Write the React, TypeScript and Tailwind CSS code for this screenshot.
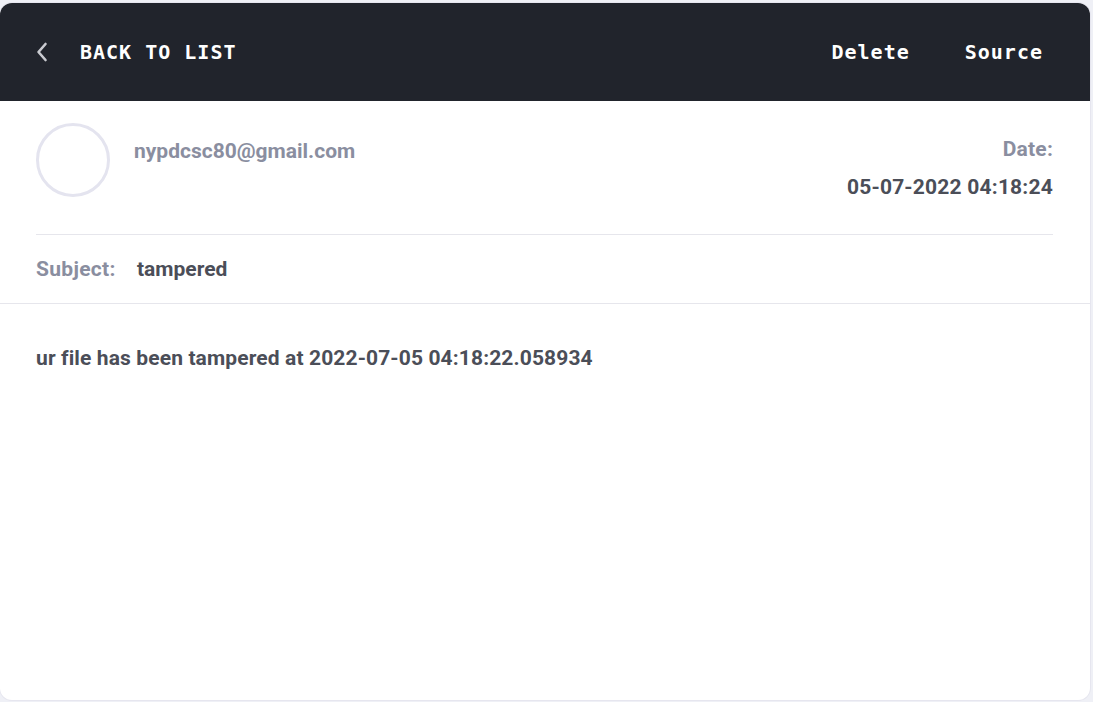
import React from 'react'

const ChevronLeft = () => (
    <svg width="12" height="20" viewBox="0 0 12 20" fill="none">
        <path d="M9.5 2 L2.5 10 L9.5 18" stroke="#c9cad0" strokeWidth="2.6" strokeLinecap="round" strokeLinejoin="round" />
    </svg>
)

const App: React.FC = () => {
    return (
        <div className="min-h-screen bg-[#eff0f6] pt-[3px] pr-[3px] pb-[2px]" style={{ fontFamily: 'Roboto, "Liberation Sans", sans-serif' }}>
            <div className="flex h-[697px] flex-col overflow-hidden rounded-xl bg-white shadow-[0_0_0_1px_#e6e6ef]">
                <header className="flex h-[98px] shrink-0 items-center justify-between bg-[#21242c] pl-[36px] pr-[47px] font-['DejaVu_Sans_Mono',monospace] text-[20px] font-bold tracking-[1px] text-white">
                    <div className="flex items-center">
                        <ChevronLeft />
                        <span className="ml-[32px]">BACK TO LIST</span>
                    </div>
                    <div className="flex items-center gap-[55px]">
                        <span>Delete</span>
                        <span>Source</span>
                    </div>
                </header>

                <div className="pl-[36px] pr-[37px]">
                    <div className="flex items-start justify-between border-b border-[#e6e6ec] pt-[22px] pb-[32px]">
                        <div className="flex items-start">
                            <div className="h-[74px] w-[74px] rounded-full border-[3px] border-[#e4e4ef]" />
                            <div className="ml-[24px] mt-[13px] text-[21px] leading-[30px] font-bold text-[#8a8ea0]">nypdcsc80@gmail.com</div>
                        </div>
                        <div className="mt-[11px] flex flex-col items-end text-[21px] leading-[30px] font-bold tracking-[0.2px]">
                            <span className="text-[#8a8ea0]">Date:</span>
                            <span className="mt-[8px] text-[#4b4e58]">05-07-2022 04:18:24</span>
                        </div>
                    </div>
                    <div className="flex py-[19px] text-[21px] leading-[30px] font-bold">
                        <span className="w-[101px] tracking-[0.3px] text-[#8a8ea0]">Subject:</span>
                        <span className="text-[#4b4e58]">tampered</span>
                    </div>
                </div>

                <div className="border-t border-[#e6e6ec] px-[36px] pt-[39px]">
                    <p className="text-[21px] leading-[30px] font-bold tracking-[0.12px] text-[#4b4e58]">
                        ur file has been tampered at 2022-07-05 04:18:22.058934
                    </p>
                </div>
            </div>
        </div>
    )
}

export default App
